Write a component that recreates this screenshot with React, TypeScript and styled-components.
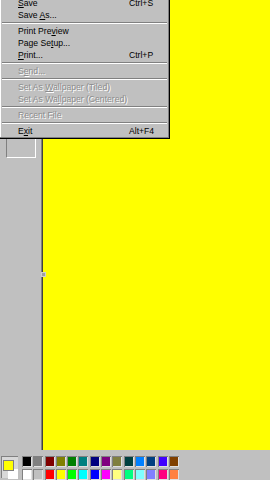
import React from "react";
import styled, { createGlobalStyle } from "styled-components";

const Global = createGlobalStyle`
  html, body { margin: 0; padding: 0; background: #c0c0c0; overflow: hidden; }
  #root { width: 270px; height: 480px; }
`;

const Window = styled.div`
  position: relative;
  width: 270px;
  height: 480px;
  display: flex;
  flex-direction: column;
  background: #c0c0c0;
  font-family: "Liberation Sans", Arial, sans-serif;
  overflow: hidden;
`;

const Workspace = styled.div`
  display: flex;
  height: 455px;
`;

const Toolbox = styled.div`
  width: 41px;
  display: flex;
  flex-direction: column;
  align-items: center;
  padding-top: 98px;
  box-sizing: border-box;
`;

const OptionsBox = styled.div`
  width: 30px;
  height: 60px;
  box-sizing: border-box;
  border-top: 1px solid #808080;
  border-left: 1px solid #808080;
  border-right: 1px solid #ffffff;
  border-bottom: 1px solid #ffffff;
`;

const CanvasArea = styled.div`
  position: relative;
  flex: 1;
  background: #ffff00;
  border-left: 1px solid #808080;
  box-shadow: inset 1px 0 0 #404040;
`;

const Handle = styled.div`
  position: absolute;
  left: -1px;
  top: 272px;
  width: 3px;
  height: 3px;
  background: #a0a0a0;
  border: 1px solid #d0d0d0;
`;

const PaletteBar = styled.div`
  display: flex;
  align-items: flex-start;
  gap: 4px;
  padding: 6px 0 0 1px;
`;

const CurrentBox = styled.div`
  position: relative;
  width: 17px;
  height: 22px;
  box-sizing: border-box;
  background: #d8d8d8;
  border-top: 1px solid #808080;
  border-left: 1px solid #808080;
`;

const BackSwatch = styled.div`
  position: absolute;
  left: 6px;
  top: 12px;
  width: 10px;
  height: 10px;
  background: #ffffff;
`;

const FrontSwatch = styled.div`
  position: absolute;
  left: 1px;
  top: 3px;
  width: 9px;
  height: 9px;
  background: #ffff00;
  border: 1px solid #808080;
`;

const Swatches = styled.div`
  display: grid;
  grid-template-columns: repeat(14, 10px);
  grid-auto-rows: 11px;
  column-gap: 1.3px;
  row-gap: 2px;
`;

const Swatch = styled.div<{ $c: string }>`
  background: ${(p) => p.$c};
  box-shadow: inset 1px 1px 0 #808080, inset -1px -1px 0 #e0e0e0;
`;

const Menu = styled.div`
  position: absolute;
  top: -3px;
  left: 0;
  width: 170px;
  box-sizing: border-box;
  background: #c0c0c0;
  border-right: 1px solid #000;
  border-bottom: 1px solid #000;
  box-shadow: inset -1px -1px 0 #808080, inset 1px 1px 0 #ffffff;
  padding: 0 2px 1px 2px;
  font-size: 8.6px;
`;

const Item = styled.div<{ $disabled?: boolean }>`
  display: flex;
  align-items: center;
  height: 12px;
  padding-left: 16px;
  color: ${(p) => (p.$disabled ? "#8c8c8c" : "#000")};
  text-shadow: ${(p) => (p.$disabled ? "1px 1px 0 #ffffff" : "none")};
  white-space: nowrap;
`;

const Label = styled.span`
  width: 111px;
`;

const Shortcut = styled.span``;

const Sep = styled.div`
  height: 4px;
  display: flex;
  flex-direction: column;
  justify-content: center;
  &::before {
    content: "";
    display: block;
    height: 1px;
    background: #808080;
    border-bottom: 1px solid #ffffff;
  }
`;

const U = styled.span`
  text-decoration: underline;
`;

const row1 = [
  "#000000", "#808080", "#800000", "#808000", "#008000", "#008080", "#000080",
  "#800080", "#808040", "#004040", "#0080ff", "#004080", "#4000ff", "#804000",
];
const row2 = [
  "#ffffff", "#c0c0c0", "#ff0000", "#ffff00", "#00ff00", "#00ffff", "#0000ff",
  "#ff00ff", "#ffff80", "#00ff80", "#80ffff", "#8080ff", "#ff0080", "#ff8040",
];

export default function App() {
  return (
    <>
      <Global />
      <Window>
        <Workspace>
          <Toolbox>
            <OptionsBox />
          </Toolbox>
          <CanvasArea>
            <Handle />
          </CanvasArea>
        </Workspace>
        <PaletteBar>
          <CurrentBox>
            <BackSwatch />
            <FrontSwatch />
          </CurrentBox>
          <Swatches>
            {[...row1, ...row2].map((c, i) => (
              <Swatch key={i} $c={c} />
            ))}
          </Swatches>
        </PaletteBar>
        <Menu>
          <Item>
            <Label><U>S</U>ave</Label>
            <Shortcut>Ctrl+S</Shortcut>
          </Item>
          <Item>
            <Label>Save <U>A</U>s...</Label>
          </Item>
          <Sep />
          <Item>
            <Label>Print Pre<U>v</U>iew</Label>
          </Item>
          <Item>
            <Label>Page Se<U>t</U>up...</Label>
          </Item>
          <Item>
            <Label><U>P</U>rint...</Label>
            <Shortcut>Ctrl+P</Shortcut>
          </Item>
          <Sep />
          <Item $disabled>
            <Label>S<U>e</U>nd...</Label>
          </Item>
          <Sep />
          <Item $disabled>
            <Label>Set As <U>W</U>allpaper (Tiled)</Label>
          </Item>
          <Item $disabled>
            <Label>Set As Wa<U>l</U>lpaper (Centered)</Label>
          </Item>
          <Sep />
          <Item $disabled>
            <Label>Recent File</Label>
          </Item>
          <Sep />
          <Item>
            <Label>E<U>x</U>it</Label>
            <Shortcut>Alt+F4</Shortcut>
          </Item>
        </Menu>
      </Window>
    </>
  );
}
